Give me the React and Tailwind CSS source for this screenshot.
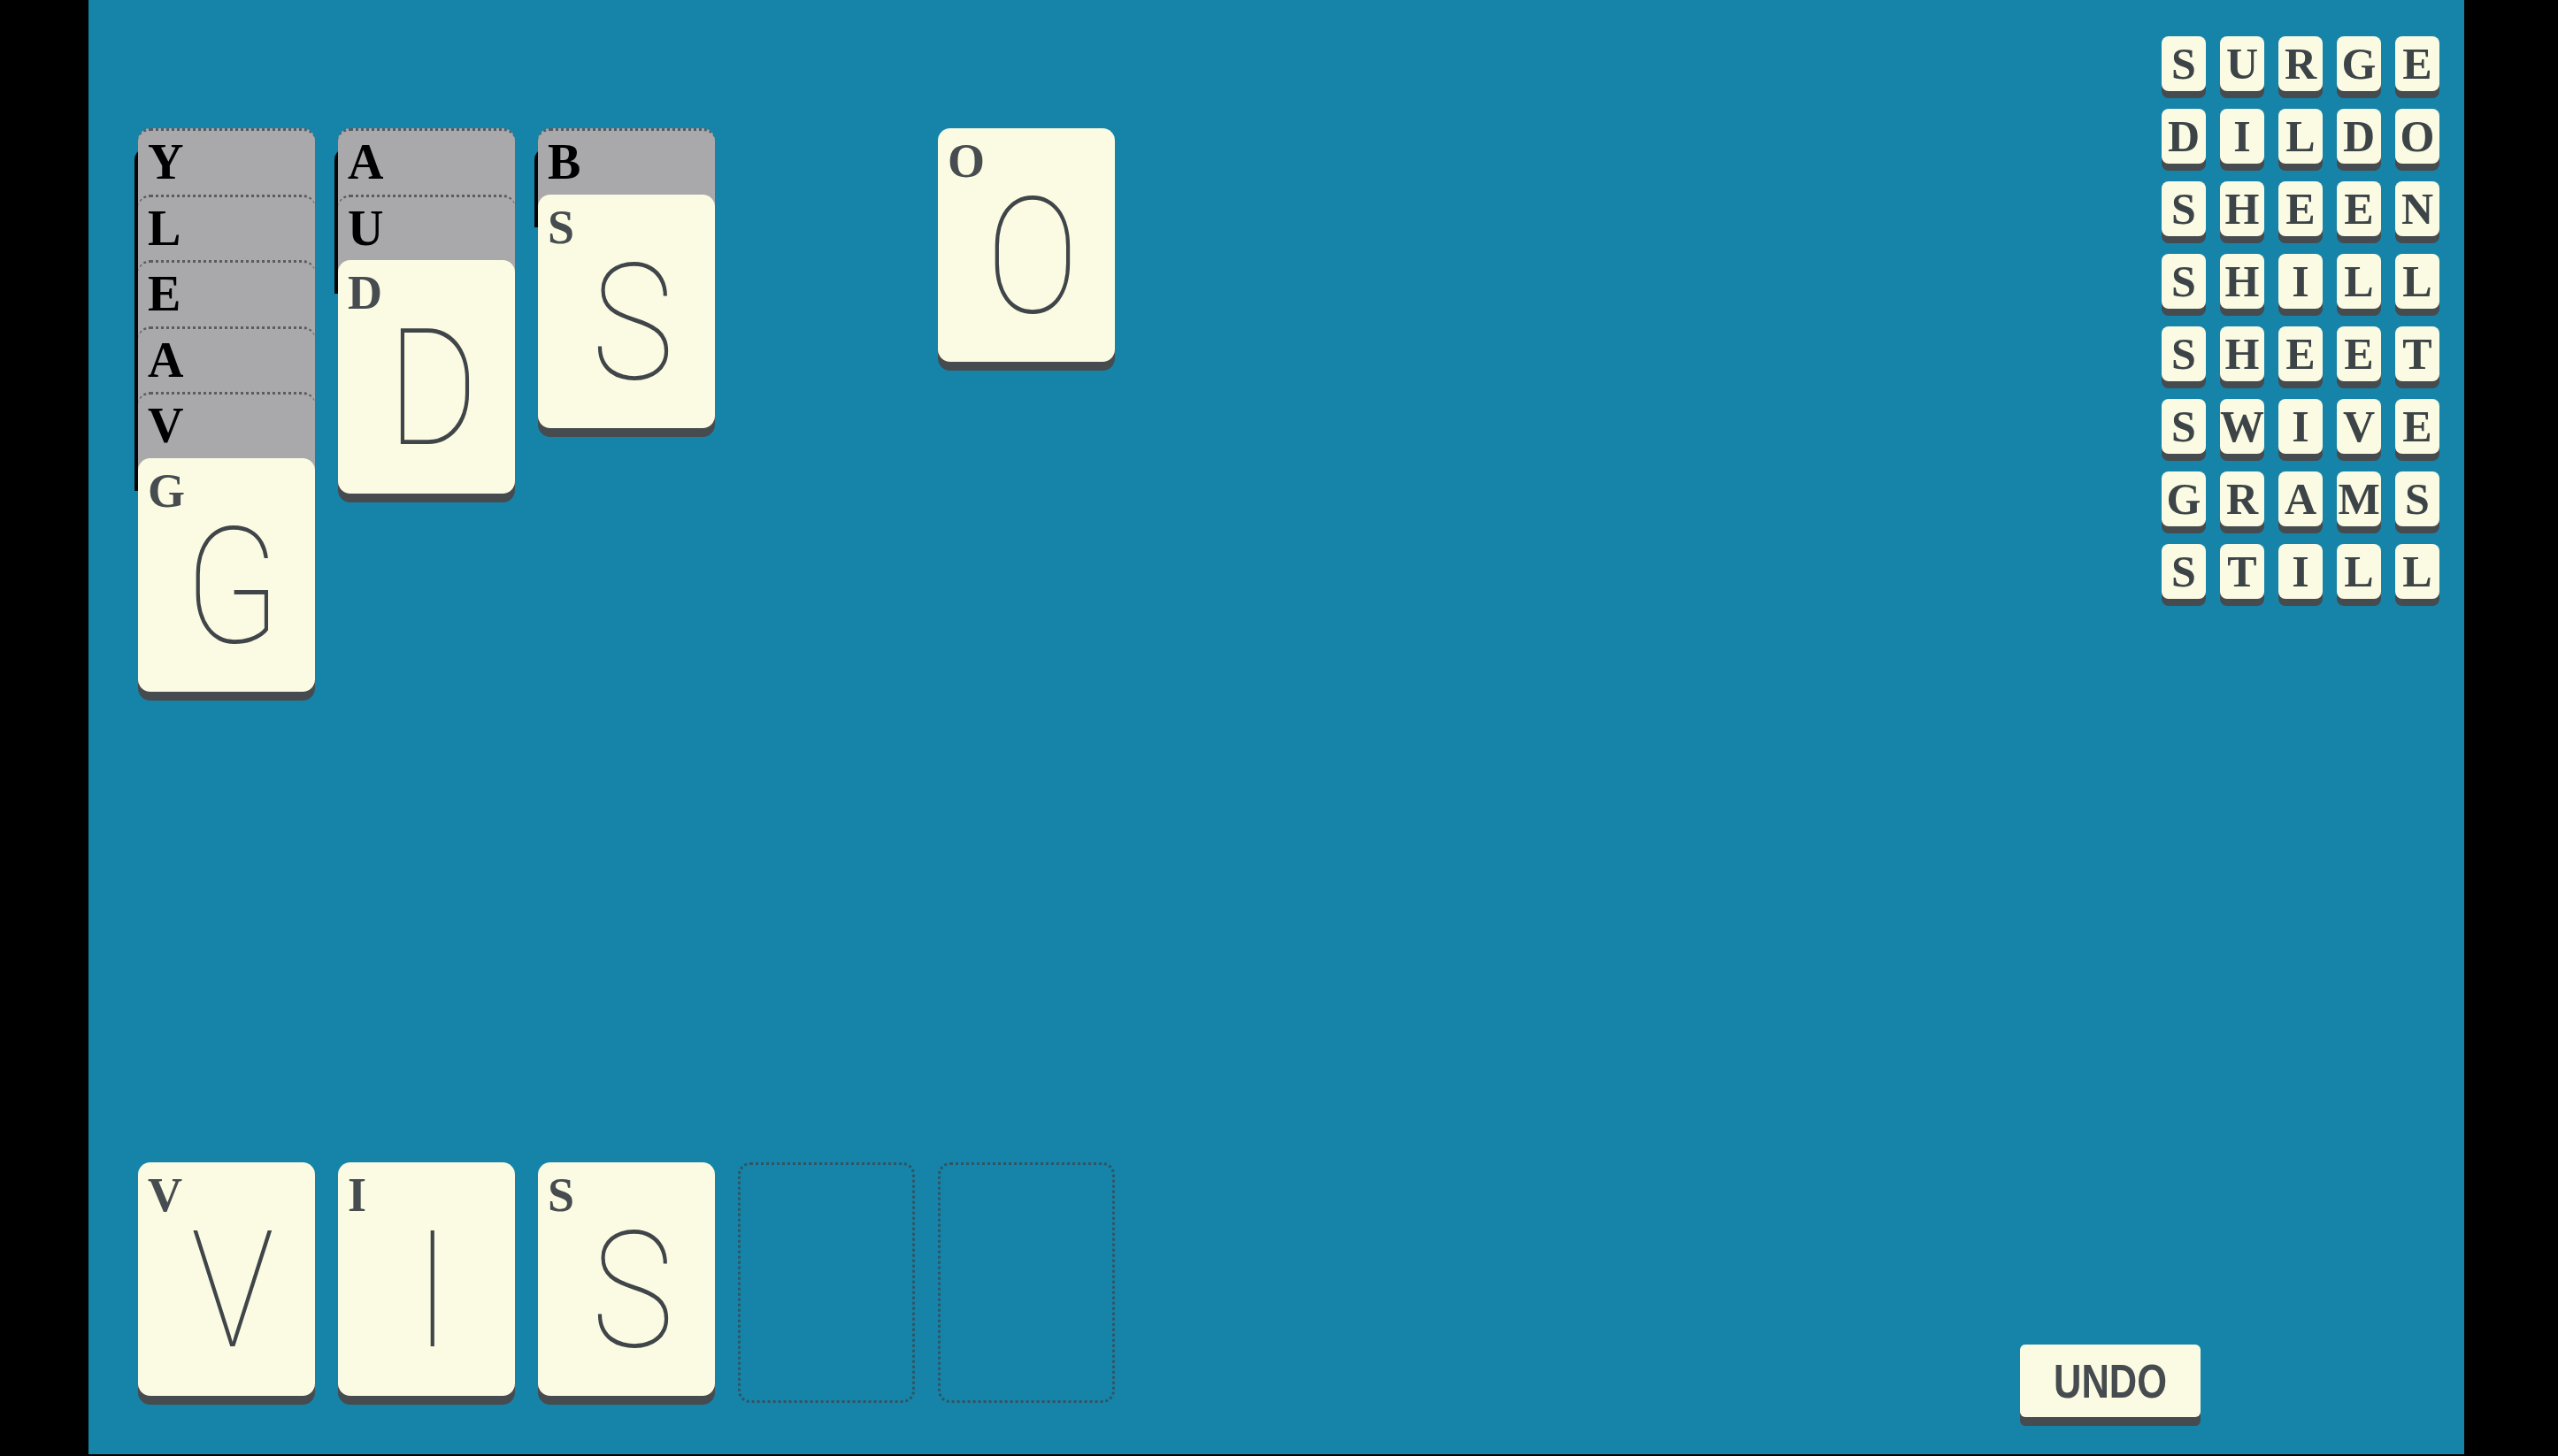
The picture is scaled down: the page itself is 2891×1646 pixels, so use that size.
const columns = [
  { hidden: ['Y', 'L', 'E', 'A', 'V'], top: 'G' },
  { hidden: ['A', 'U'], top: 'D' },
  { hidden: ['B'], top: 'S' },
  { hidden: [], top: null },
  { hidden: [], top: 'O' },
];

const hand = ['V', 'I', 'S', null, null];

const words = ['SURGE', 'DILDO', 'SHEEN', 'SHILL', 'SHEET', 'SWIVE', 'GRAMS', 'STILL'];

const serif = "font-['Liberation_Serif','DejaVu_Serif',serif]";

function HiddenCard({ letter }) {
  return (
    <div className="h-[90px] w-[200px] mb-[-15.5px] rounded-t-[14px] bg-[#a9a9ac] border-t-[3px] border-dotted border-[#5c5c60] shadow-[-4px_22px_0_#050505]">
      <div className={`pt-[7px] pl-[11px] text-[56px] leading-none font-bold text-black ${serif}`}>
        {letter}
      </div>
    </div>
  );
}

function FaceCard({ letter }) {
  return (
    <div className="h-[264px] w-[200px] rounded-[14px] bg-[#fbfbe3] shadow-[0_10px_0_#454b4f] flex flex-col">
      <div className={`pt-[10px] pl-[11px] text-[54px] leading-none font-bold text-[#464c4f] ${serif}`}>
        {letter}
      </div>
      <div className="flex justify-center pl-[14px] mt-[-10px]">
        <span className="inline-block scale-x-[0.86] text-[183px] leading-none font-thin text-[#3f4548] font-['Roboto','Lato',sans-serif]">
          {letter}
        </span>
      </div>
    </div>
  );
}

function EmptySlot() {
  return <div className="h-[272px] w-[200px] rounded-[14px] border-[3px] border-dotted border-[#2f5566]" />;
}

export default function App() {
  return (
    <div className="w-[2891px] h-[1646px] bg-black flex overflow-hidden">
      <div className="ml-[100px] w-[2685px] h-[1644px] bg-[#1684a8] flex">
        {/* board */}
        <div className="flex flex-col pl-[56px] pt-[145px] pb-[58px]">
          <div className="flex gap-[26px] items-start">
            {columns.map((col, i) => (
              <div key={i} className="w-[200px] flex flex-col">
                {col.hidden.map((l, j) => (
                  <HiddenCard key={j} letter={l} />
                ))}
                {col.top && <FaceCard letter={col.top} />}
              </div>
            ))}
          </div>
          <div className="flex-1" />
          <div className="flex gap-[26px] items-start">
            {hand.map((l, i) => (l ? <FaceCard key={i} letter={l} /> : <EmptySlot key={i} />))}
          </div>
        </div>

        {/* words + undo */}
        <div className="ml-auto flex flex-col items-end pt-[41px] pr-[28px]">
          <div className="flex flex-col gap-y-[20px]">
            {words.map((w) => (
              <div key={w} className="flex gap-x-[16px]">
                {w.split('').map((c, k) => (
                  <div
                    key={k}
                    className={`w-[50px] h-[62px] rounded-[8px] bg-[#fbfbe3] shadow-[0_8px_0_#454b4f] flex items-center justify-center text-[50px] leading-none font-bold text-[#3d4447] ${serif}`}
                  >
                    {c}
                  </div>
                ))}
              </div>
            ))}
          </div>
          <div className="flex-1" />
          <button className="mr-[270px] mb-[42px] w-[204px] h-[82px] rounded-[6px] bg-[#fbfbe3] shadow-[0_10px_0_#454b4f] flex items-center justify-center">
            <span className="inline-block scale-x-[0.82] text-[53px] leading-none font-bold text-[#454b4f] font-['Liberation_Sans',sans-serif]">
              UNDO
            </span>
          </button>
        </div>
      </div>
    </div>
  );
}
